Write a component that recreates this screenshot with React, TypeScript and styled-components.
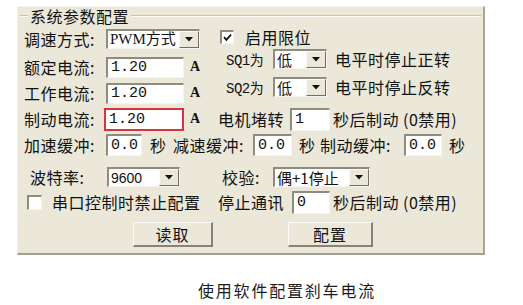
import styled, { createGlobalStyle } from 'styled-components';

const GlobalStyle = createGlobalStyle`
  html, body {
    margin: 0;
    padding: 0;
    background: #ffffff;
  }
  body {
    font-family: "Noto Sans CJK SC", "Noto Sans", sans-serif;
  }
`;

const Page = styled.div`
  width: 523px;
  height: 305px;
  overflow: hidden;
  padding-top: 6px;
  box-sizing: border-box;
`;

const Panel = styled.div`
  margin-left: 17px;
  width: 468px;
  height: 249px;
  box-sizing: border-box;
  background: #ebe8d9;
  border-top: 1px solid #f6f5ef;
  border-left: 1px solid #f3f1e8;
  border-right: 2px solid #a8a69b;
  border-bottom: 2px solid #a19e93;
  padding-left: 6px;
  font-size: 16px;
  letter-spacing: 0.5px;
  color: #111111;
`;

const Legend = styled.div`
  display: flex;
  align-items: center;
  height: 18px;
  margin-left: -4px;
  margin-right: 2px;
`;

const LegendLine = styled.div<{ $w?: number }>`
  ${p => (p.$w ? `width: ${p.$w}px;` : 'flex: 1;')}
  height: 0;
  border-top: 1px solid #c6c3b4;
  border-bottom: 1px solid #fbfaf5;
`;

const LegendTitle = styled.span`
  padding: 0 2px;
  white-space: nowrap;
  line-height: 18px;
`;

const TopSection = styled.div`
  display: flex;
  height: 80px;
`;

const Column = styled.div<{ $w?: number }>`
  display: flex;
  flex-direction: column;
  ${p => (p.$w ? `width: ${p.$w}px;` : 'flex: 1;')}
`;

const Row = styled.div<{ $h: number; $mt?: number; $pl?: number }>`
  display: flex;
  align-items: center;
  height: ${p => p.$h}px;
  margin-top: ${p => p.$mt ?? 0}px;
  padding-left: ${p => p.$pl ?? 0}px;
  white-space: nowrap;
`;

const Text = styled.span<{ $w?: number; $ml?: number; $latin?: boolean }>`
  display: inline-block;
  ${p => (p.$w ? `width: ${p.$w}px;` : '')}
  margin-left: ${p => p.$ml ?? 0}px;
  white-space: nowrap;
  ${p =>
    p.$latin
      ? `font-family: "Liberation Mono", "Noto Sans CJK SC", monospace; font-size: 14px; letter-spacing: -0.5px;`
      : ''}
`;

const Unit = styled.span<{ $ml?: number }>`
  margin-left: ${p => p.$ml ?? 6}px;
  font-family: "Liberation Serif", serif;
  font-weight: bold;
  font-size: 14px;
  width: 10px;
`;

const Field = styled.div<{ $w: number; $h?: number; $red?: boolean }>`
  box-sizing: border-box;
  width: ${p => p.$w}px;
  height: ${p => p.$h ?? 21}px;
  background: #ffffff;
  display: flex;
  align-items: center;
  padding-left: 3px;
  font-family: "Liberation Mono", monospace;
  font-size: 15px;
  line-height: 1;
  letter-spacing: 0;
  color: #111;
  ${p =>
    p.$red
      ? `border: 2px solid #d8343c;`
      : `border-top: 2px solid #8e8c80;
         border-left: 2px solid #8e8c80;
         border-right: 1px solid #f6f5f0;
         border-bottom: 1px solid #f6f5f0;`}
`;

const SelectBox = styled.div<{ $w: number }>`
  box-sizing: border-box;
  width: ${p => p.$w}px;
  height: 20px;
  background: #ffffff;
  display: flex;
  align-items: stretch;
  border-top: 2px solid #8e8c80;
  border-left: 2px solid #8e8c80;
  border-right: 1px solid #f6f5f0;
  border-bottom: 1px solid #f6f5f0;
`;

const SelectValue = styled.div<{ $font?: 'serif' | 'sans' }>`
  flex: 1;
  display: flex;
  align-items: center;
  padding-left: 2px;
  line-height: 1;
  white-space: nowrap;
  letter-spacing: 0;
  font-size: ${p => (p.$font === 'sans' ? 14 : 15)}px;
  ${p =>
    p.$font === 'serif'
      ? `font-family: "Liberation Serif", "Noto Sans CJK SC", serif;`
      : p.$font === 'sans'
      ? `font-family: "Liberation Sans", sans-serif;`
      : ''}
`;

const DropButton = styled.div`
  width: 20px;
  flex: none;
  box-sizing: border-box;
  background: #ebe8d9;
  border-top: 1px solid #fbfaf6;
  border-left: 1px solid #fbfaf6;
  border-right: 1px solid #6f6d65;
  border-bottom: 1px solid #6f6d65;
  display: flex;
  align-items: center;
  justify-content: center;
`;

const Check = styled.div<{ $ml?: number; $size?: number }>`
  box-sizing: border-box;
  width: ${p => p.$size ?? 14}px;
  height: ${p => p.$size ?? 14}px;
  margin-left: ${p => p.$ml ?? 0}px;
  background: #ffffff;
  border-top: 2px solid #8e8c80;
  border-left: 2px solid #8e8c80;
  border-right: 1px solid #f6f5f0;
  border-bottom: 1px solid #f6f5f0;
  display: flex;
  align-items: center;
  justify-content: center;
`;

const Button = styled.div<{ $w: number; $ml: number }>`
  box-sizing: border-box;
  width: ${p => p.$w}px;
  height: 25px;
  margin-left: ${p => p.$ml}px;
  background: #ebe8d9;
  border-top: 1px solid #fdfcf8;
  border-left: 1px solid #fdfcf8;
  border-right: 2px solid #86847a;
  border-bottom: 2px solid #86847a;
  display: flex;
  align-items: center;
  justify-content: center;
  font-size: 16px;
  letter-spacing: 1px;
`;

const Caption = styled.div`
  margin-top: 25px;
  padding-left: 198px;
  height: 20px;
  line-height: 20px;
  font-size: 16px;
  letter-spacing: 1.8px;
  color: #1c1c1c;
`;

function Arrow() {
  return (
    <svg width="8" height="5" viewBox="0 0 8 5">
      <path d="M0 0 H8 L4 4.5 Z" fill="#111" />
    </svg>
  );
}

function Tick() {
  return (
    <svg width="9" height="9" viewBox="0 0 9 9">
      <path d="M1 4.2 L3.4 6.8 L8 1.6" stroke="#111" strokeWidth="1.8" fill="none" />
    </svg>
  );
}

function Select({ w, value, font }: { w: number; value: string; font?: 'serif' | 'sans' }) {
  return (
    <SelectBox $w={w}>
      <SelectValue $font={font}>{value}</SelectValue>
      <DropButton>
        <Arrow />
      </DropButton>
    </SelectBox>
  );
}

export default function App() {
  return (
    <>
      <GlobalStyle />
      <Page>
        <Panel>
          <Legend>
            <LegendLine $w={8} />
            <LegendTitle>系统参数配置</LegendTitle>
            <LegendLine />
          </Legend>

          <TopSection>
            <Column $w={196}>
              <Row $h={28}>
                <Text $w={82}>调速方式:</Text>
                <Select w={94} value="PWM方式" font="serif" />
              </Row>
              <Row $h={28}>
                <Text $w={82}>额定电流:</Text>
                <Field $w={78}>1.20</Field>
                <Unit>A</Unit>
              </Row>
              <Row $h={24}>
                <Text $w={82}>工作电流:</Text>
                <Field $w={78}>1.20</Field>
                <Unit>A</Unit>
              </Row>
            </Column>
            <Column>
              <Row $h={24}>
                <Check $size={14}>
                  <Tick />
                </Check>
                <Text $ml={11}>启用限位</Text>
              </Row>
              <Row $h={20} $pl={6}>
                <Text $w={47} $latin>SQ1为</Text>
                <Select w={54} value="低" />
                <Text $ml={8}>电平时停止正转</Text>
              </Row>
              <Row $h={36} $pl={6}>
                <Text $w={47} $latin>SQ2为</Text>
                <Select w={54} value="低" />
                <Text $ml={8}>电平时停止反转</Text>
              </Row>
            </Column>
          </TopSection>

          <Row $h={28}>
            <Text $w={80}>制动电流:</Text>
            <Field $w={80} $h={23} $red>1.20</Field>
            <Unit>A</Unit>
            <Text $ml={18} $w={72}>电机堵转</Text>
            <Field $w={40} $h={23}>1</Field>
            <Text $ml={3}>秒后制动 (0禁用)</Text>
          </Row>

          <Row $h={24}>
            <Text $w={82}>加速缓冲:</Text>
            <Field $w={36} $h={22}>0.0</Field>
            <Text $ml={8} $w={15}>秒</Text>
            <Text $ml={8} $w={80}>减速缓冲:</Text>
            <Field $w={39} $h={22}>0.0</Field>
            <Text $ml={7} $w={15}>秒</Text>
            <Text $ml={6} $w={84}>制动缓冲:</Text>
            <Field $w={38} $h={22}>0.0</Field>
            <Text $ml={7}>秒</Text>
          </Row>

          <Row $h={24} $mt={8}>
            <Text $ml={6} $w={77}>波特率:</Text>
            <Select w={73} value="9600" font="sans" />
            <Text $ml={42} $w={51}>校验:</Text>
            <Select w={97} value="偶+1停止" />
          </Row>

          <Row $h={26}>
            <Check $ml={3} $size={15} />
            <Text $ml={10} $w={166}>串口控制时禁止配置</Text>
            <Text $w={74}>停止通讯</Text>
            <Field $w={38} $h={23}>0</Field>
            <Text $ml={3}>秒后制动 (0禁用)</Text>
          </Row>

          <Row $h={25} $mt={7}>
            <Button $w={80} $ml={109}>读取</Button>
            <Button $w={85} $ml={75}>配置</Button>
          </Row>
        </Panel>
        <Caption>使用软件配置刹车电流</Caption>
      </Page>
    </>
  );
}
